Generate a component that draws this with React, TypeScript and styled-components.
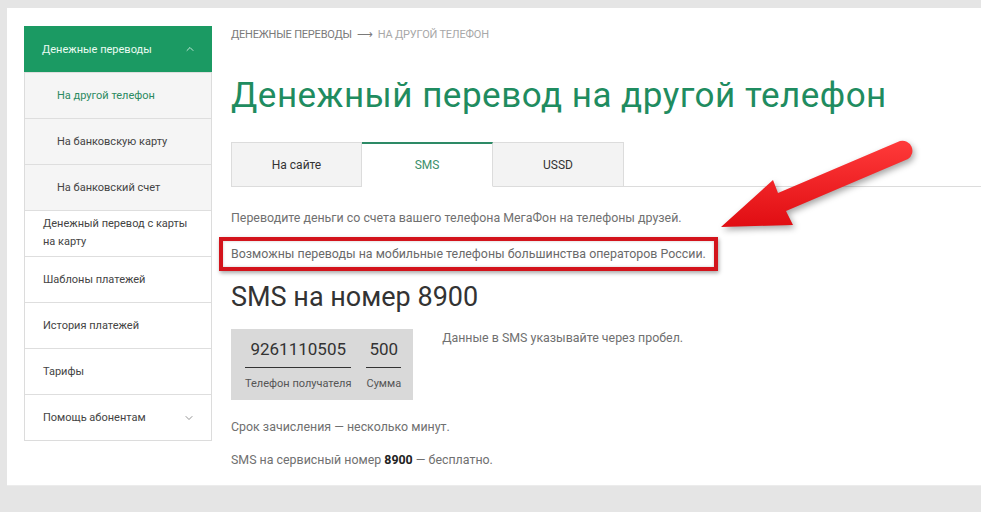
import styled, { createGlobalStyle } from 'styled-components';
import { ChevronUp, ChevronDown } from 'lucide-react';

const GlobalStyle = createGlobalStyle`
  html, body {
    margin: 0;
    padding: 0;
    background: #e5e5e5;
    font-family: Roboto, "Noto Sans", Arial, sans-serif;
  }
  * { box-sizing: border-box; }
`;

const Card = styled.div`
  position: relative;
  margin: 8px 0 0 7px;
  height: 478px;
  background: #fff;
  border-bottom: 1px solid #ececec;
  padding: 18px 0 0 17px;
  display: flex;
  gap: 19px;
  overflow: hidden;
`;

const Sidebar = styled.nav`
  width: 188px;
  flex: none;
  align-self: flex-start;
  border: 1px solid #dcdcdc;
  border-top: none;
`;

const MenuHeader = styled.div`
  height: 46px;
  background: #1b9a63;
  color: #eafaf2;
  font-size: 11px;
  display: flex;
  align-items: center;
  justify-content: space-between;
  padding: 0 16px 0 18px;
  margin: 0 -1px;
`;

const MenuItem = styled.div<{ $sub?: boolean; $active?: boolean; $tall?: boolean }>`
  min-height: 46px;
  display: flex;
  align-items: center;
  justify-content: space-between;
  padding: ${p => (p.$tall ? '4px 16px 5px 18px' : '0 16px 0 18px')};
  padding-left: ${p => (p.$sub ? '32px' : '18px')};
  background: ${p => (p.$sub ? '#f5f5f5' : '#fff')};
  color: ${p => (p.$active ? '#2b8a61' : '#444')};
  font-size: 11px;
  line-height: 18px;
  border-top: 1px solid #dedede;
  &:first-of-type { border-top: none; }
`;

const Main = styled.main`
  flex: 1;
  display: flex;
  flex-direction: column;
  align-items: flex-start;
`;

const Crumbs = styled.div`
  font-size: 11px;
  line-height: 18px;
  text-transform: uppercase;
  color: #7a7a7a;
  letter-spacing: -0.2px;
  span { color: #a8a8a8; }
`;

const Title = styled.h1`
  margin: 32px 0 0;
  font-size: 35px;
  line-height: 40px;
  font-weight: 400;
  color: #1f8c60;
  letter-spacing: 0.5px;
`;

const TabBar = styled.div`
  margin-top: 26px;
  display: flex;
  align-self: stretch;
  border-bottom: 1px solid #dcdcdc;
`;

const Tab = styled.div<{ $active?: boolean }>`
  width: 131px;
  height: 45px;
  margin-bottom: -1px;
  display: flex;
  align-items: center;
  justify-content: center;
  font-size: 12px;
  background: ${p => (p.$active ? '#fff' : '#f3f3f3')};
  color: ${p => (p.$active ? '#3c8f6b' : '#333')};
  border: 1px solid #dcdcdc;
  border-top: ${p => (p.$active ? '2px solid #2d8a66' : '1px solid #dcdcdc')};
  border-bottom: ${p => (p.$active ? '1px solid #fff' : '1px solid #dcdcdc')};
  & + & { border-left: none; }
`;

const Text = styled.p<{ $gap?: number }>`
  margin: ${p => p.$gap ?? 0}px 0 0;
  font-size: 12.4px;
  line-height: 18px;
  color: #707070;
  b { color: #222; font-weight: 700; }
`;

const Highlight = styled.div`
  margin: 10px 0 0 -12px;
  padding: 4px 8px;
  border: 4px solid #d3141c;
  box-shadow: 1px 2px 4px rgba(0, 0, 0, 0.35), inset 0 0 3px rgba(0, 0, 0, 0.2);
  font-size: 12.4px;
  line-height: 18px;
  color: #6a6a6a;
`;

const SubTitle = styled.h2`
  margin: 11px 0 0;
  font-size: 27px;
  line-height: 30px;
  font-weight: 400;
  color: #333;
`;

const SmsRow = styled.div`
  margin-top: 17px;
  display: flex;
  align-items: flex-start;
  gap: 29px;
`;

const SmsBox = styled.div`
  background: #d9d9d9;
  padding: 10px 12px 9px 14px;
  display: flex;
  gap: 15px;
`;

const Field = styled.div`
  display: flex;
  flex-direction: column;
  align-items: center;
`;

const Value = styled.div`
  font-size: 17px;
  line-height: 20px;
  color: #333;
  padding: 0 0 8px;
  border-bottom: 1.5px solid #333;
  align-self: stretch;
  text-align: center;
`;

const Label = styled.div`
  margin-top: 9px;
  font-size: 11px;
  line-height: 14px;
  color: #555;
`;

const Note = styled.div`
  font-size: 12.4px;
  line-height: 18px;
  color: #707070;
`;

const Arrow = styled.svg`
  position: absolute;
  left: 687px;
  top: 117px;
  width: 230px;
  height: 110px;
  overflow: visible;
  filter: drop-shadow(2px 3px 3px rgba(0, 0, 0, 0.35));
`;

export default function App() {
  return (
    <>
      <GlobalStyle />
      <Card>
        <Sidebar>
          <MenuHeader>
            Денежные переводы
            <ChevronUp size={12} strokeWidth={1.6} />
          </MenuHeader>
          <MenuItem $sub $active>На другой телефон</MenuItem>
          <MenuItem $sub>На банковскую карту</MenuItem>
          <MenuItem $sub>На банковский счет</MenuItem>
          <MenuItem $tall>Денежный перевод с карты<br />на карту</MenuItem>
          <MenuItem>Шаблоны платежей</MenuItem>
          <MenuItem>История платежей</MenuItem>
          <MenuItem>Тарифы</MenuItem>
          <MenuItem>
            Помощь абонентам
            <ChevronDown size={12} strokeWidth={1.6} color="#777" />
          </MenuItem>
        </Sidebar>

        <Main>
          <Crumbs>
            Денежные переводы &nbsp;⟶ <span>&nbsp;На другой телефон</span>
          </Crumbs>
          <Title>Денежный перевод на другой телефон</Title>
          <TabBar>
            <Tab>На сайте</Tab>
            <Tab $active>SMS</Tab>
            <Tab>USSD</Tab>
          </TabBar>
          <Text $gap={22}>Переводите деньги со счета вашего телефона МегаФон на телефоны друзей.</Text>
          <Highlight>Возможны переводы на мобильные телефоны большинства операторов России.</Highlight>
          <SubTitle>SMS на номер 8900</SubTitle>
          <SmsRow>
            <SmsBox>
              <Field>
                <Value>9261110505</Value>
                <Label>Телефон получателя</Label>
              </Field>
              <Field>
                <Value>500</Value>
                <Label>Сумма</Label>
              </Field>
            </SmsBox>
            <Note>Данные в SMS указывайте через пробел.</Note>
          </SmsRow>
          <Text $gap={18}>Срок зачисления — несколько минут.</Text>
          <Text $gap={15}>SMS на сервисный номер <b>8900</b> — бесплатно.</Text>
        </Main>

        <Arrow viewBox="0 0 230 110">
          <defs>
            <linearGradient id="arrowFill" x1="0" y1="0" x2="0" y2="1">
              <stop offset="0" stopColor="#ff3a3a" />
              <stop offset="1" stopColor="#e00d12" />
            </linearGradient>
          </defs>
          <path
            d="M 27 102 L 79 55 L 84 68 L 206 16 A 10 10 0 0 1 214 34 L 92 86 L 99 100 Z"
            fill="url(#arrowFill)"
          />
        </Arrow>
      </Card>
    </>
  );
}
